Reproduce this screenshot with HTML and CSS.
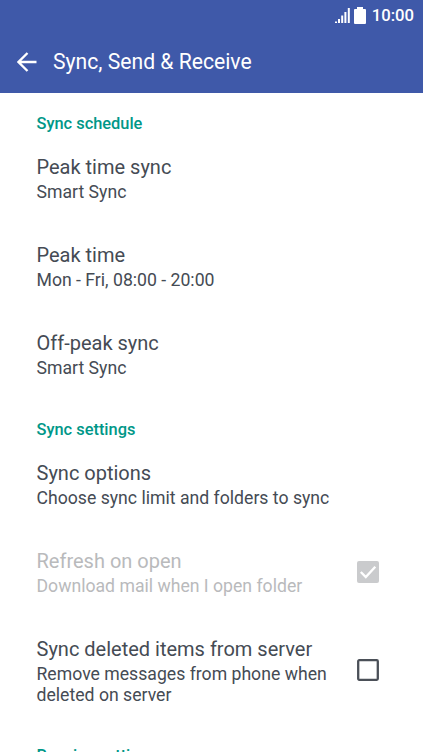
FILE: index.html
```html
<!DOCTYPE html>
<html lang="en">
<head>
    <meta charset="UTF-8">
    <meta name="viewport" content="width=device-width, initial-scale=1.0">
    <title>Sync, Send &amp; Receive</title>
    <link rel="stylesheet" href="styles.css">
</head>
<body>
    <header>
        <div class="status-bar">
            <svg class="signal" width="16" height="16" viewBox="0 0 16 16">
                <path d="M1 14.500v1.500M4 12v4M7.200 8.500v7.500M10.400 5v11M13.800 1v15" stroke="#fff" stroke-width="2"/>
            </svg>
            <svg class="battery" width="12" height="17" viewBox="0 0 12 17">
                <path d="M3 0h6v2H11q1 0 1 1v13q0 1-1 1H1q-1 0-1-1V3q0-1 1-1h2z" fill="#fff"/>
            </svg>
            <span class="clock">10:00</span>
        </div>
        <div class="toolbar">
            <svg class="back" width="20" height="20" viewBox="0 0 20 20">
                <path d="M19.500 10H2M10.500 1L1.500 10l9 9" fill="none" stroke="#fff" stroke-width="2.300"/>
            </svg>
            <h1>Sync, Send &amp; Receive</h1>
        </div>
    </header>
    <main>
        <h2>Sync schedule</h2>
        <div class="item">
            <h3>Peak time sync</h3>
            <p>Smart Sync</p>
        </div>
        <div class="item">
            <h3>Peak time</h3>
            <p>Mon - Fri, 08:00 - 20:00</p>
        </div>
        <div class="item">
            <h3>Off-peak sync</h3>
            <p>Smart Sync</p>
        </div>
        <h2 class="settings">Sync settings</h2>
        <div class="item">
            <h3>Sync options</h3>
            <p>Choose sync limit and folders to sync</p>
        </div>
        <div class="item disabled">
            <div class="text">
                <h3>Refresh on open</h3>
                <p>Download mail when I open folder</p>
            </div>
            <svg class="check" width="22" height="22" viewBox="0 0 22 22">
                <rect width="22" height="22" rx="2" fill="#cacbcd"/>
                <path d="M3.800 11l5 5L18.300 5.800" fill="none" stroke="#fff" stroke-width="2.400"/>
            </svg>
        </div>
        <div class="item tall">
            <div class="text">
                <h3>Sync deleted items from server</h3>
                <p>Remove messages from phone when deleted on server</p>
            </div>
            <svg class="check" width="22" height="22" viewBox="0 0 22 22">
                <rect x="1.200" y="1.200" width="19.600" height="19.600" rx="1" fill="none" stroke="#4b5058" stroke-width="2.300"/>
            </svg>
        </div>
        <h2 class="receive">Receive settings</h2>
    </main>
</body>
</html>
```

FILE: styles.css
```css
body { margin: 0; height: 752px; overflow: hidden; background: #fff; color: #454b54; font-family: Roboto, sans-serif; }
h1, h2, h3, p { margin: 0; font-weight: 400; }
header { height: 93px; background: #3f59a9; color: #fff; }
.status-bar { display: flex; justify-content: flex-end; align-items: center; height: 31px; padding-right: 9px; }
.signal { margin-top: -2px; }
.battery { margin: -1px 6px 0 3px; }
.clock { font-size: 16.700px; font-weight: 500; }
.toolbar { display: flex; align-items: center; height: 62px; padding-left: 16.500px; }
.back { margin: -1px 16.500px 0 0; }
h1 { margin-top: -2px; font-size: 21.150px; }
main { padding: 20px 44px 0 36.500px; }
h2 { height: 22px; line-height: 22px; color: #009788; font-size: 16.400px; font-weight: 500; }
.item { display: flex; flex-direction: column; height: 69px; padding-top: 19px; }
h3 { font-size: 20px; line-height: 26px; white-space: nowrap; }
p { padding-top: 2px; font-size: 17.650px; line-height: 21px; }
.settings { margin-top: 20px; }
.disabled, .tall { flex-direction: row; justify-content: space-between; }
.disabled { color: #b9babc; }
.check { margin-top: 13px; }
.text { width: 300px; }
.tall { height: 91px; }
.tall .check { margin-top: 23px; }
.receive { margin-top: 18px; }
```
